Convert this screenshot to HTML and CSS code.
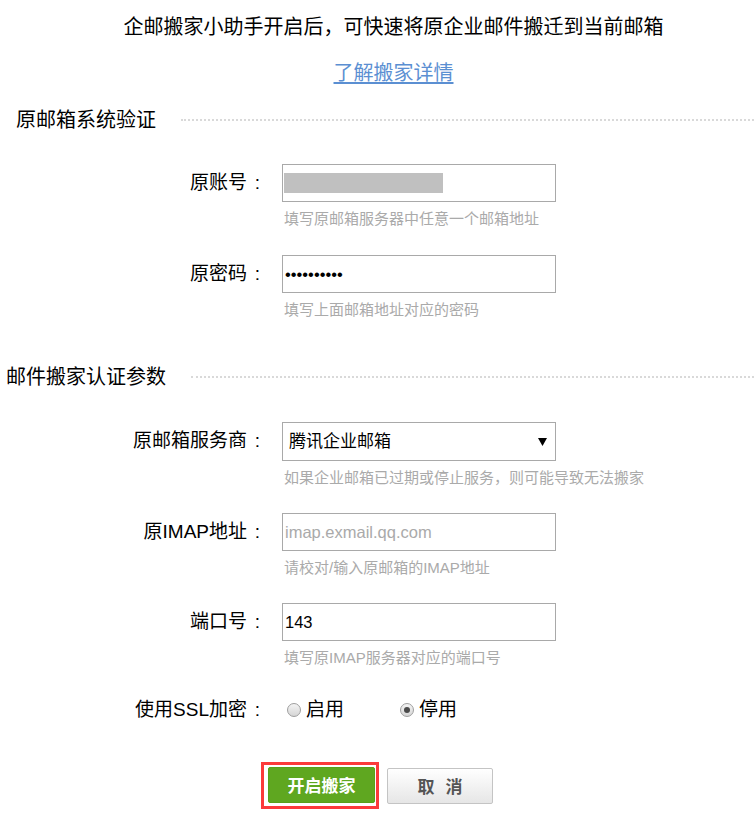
FILE: index.html
```html
<!DOCTYPE html>
<html lang="zh-CN">
<head>
<meta charset="utf-8">
<title>企邮搬家</title>
<link rel="stylesheet" href="styles.css">
</head>
<body>
<div class="page">
  <div class="intro">
    <p class="intro-text">企邮搬家小助手开启后，可快速将原企业邮件搬迁到当前邮箱</p>
    <a class="intro-link" href="#">了解搬家详情</a>
  </div>

  <div class="section-head section-head--first"><span class="section-title">原邮箱系统验证</span><i class="rule"></i></div>
  <div class="form form--first">
    <div class="row">
      <label class="label">原账号<span class="colon">:</span></label>
      <div class="field">
        <div class="input"><span class="redact"></span></div>
        <div class="hint">填写原邮箱服务器中任意一个邮箱地址</div>
      </div>
    </div>
    <div class="row">
      <label class="label">原密码<span class="colon">:</span></label>
      <div class="field">
        <input class="input" type="password" value="abcdefghij">
        <div class="hint">填写上面邮箱地址对应的密码</div>
      </div>
    </div>
  </div>

  <div class="section-head section-head--second"><span class="section-title">邮件搬家认证参数</span><i class="rule"></i></div>
  <div class="form form--second">
    <div class="row">
      <label class="label">原邮箱服务商<span class="colon">:</span></label>
      <div class="field">
        <div class="select">
          <span class="select-text">腾讯企业邮箱</span>
          <svg class="select-arrow" width="9" height="8" viewBox="0 0 9 8"><path d="M0 0H9L4.5 8Z" fill="#000"/></svg>
        </div>
        <div class="hint">如果企业邮箱已过期或停止服务，则可能导致无法搬家</div>
      </div>
    </div>
    <div class="row">
      <label class="label">原IMAP地址<span class="colon">:</span></label>
      <div class="field">
        <input class="input" type="text" placeholder="imap.exmail.qq.com">
        <div class="hint">请校对/输入原邮箱的IMAP地址</div>
      </div>
    </div>
    <div class="row">
      <label class="label">端口号<span class="colon">:</span></label>
      <div class="field">
        <input class="input" type="text" value="143">
        <div class="hint">填写原IMAP服务器对应的端口号</div>
      </div>
    </div>
    <div class="row row--ssl">
      <label class="label label--inline">使用SSL加密<span class="colon">:</span></label>
      <div class="radios">
        <span class="radio-opt"><span class="radio"></span><span class="radio-text">启用</span></span>
        <span class="radio-opt"><span class="radio radio--on"></span><span class="radio-text">停用</span></span>
      </div>
    </div>
  </div>

  <div class="actions">
    <span class="highlight"><button class="btn btn--primary" type="button">开启搬家</button></span>
    <button class="btn btn--cancel" type="button">取<span class="btn-space"></span>消</button>
  </div>
</div>
</body>
</html>
```

FILE: styles.css
```css
* { box-sizing: border-box; }

html, body {
  margin: 0;
  padding: 0;
  background: #fff;
}

body {
  font-family: "Liberation Sans", "Noto Sans CJK SC", sans-serif;
  color: #000;
  width: 754px;
  overflow: hidden;
}

.page {
  width: 754px;
}

.intro {
  padding: 13px 0 0 33px;
  text-align: center;
}

.intro-text {
  margin: 0;
  font-size: 20px;
  line-height: 28px;
}

.intro-link {
  display: inline-block;
  margin-top: 18px;
  font-size: 20px;
  line-height: 28px;
  color: #5b8fd2;
  text-decoration: underline;
  text-underline-offset: 2px;
}

.section-head {
  display: flex;
  align-items: center;
}

.section-head--first {
  margin-top: 19px;
  padding-left: 16px;
}

.section-head--second {
  margin-top: 43px;
  padding-left: 6px;
}

.section-title {
  font-size: 20px;
  line-height: 28px;
  white-space: nowrap;
}

.rule {
  flex: 1;
  margin-left: 25px;
  margin-top: -1px;
  height: 0;
  border-top: 2px dotted #d9d9d9;
}

.form {
  display: flex;
  flex-direction: column;
  gap: 26px;
}

.form--first { margin-top: 30px; }
.form--second { margin-top: 31px; gap: 25px; }

.row {
  display: grid;
  grid-template-columns: 266px 274px;
  column-gap: 16px;
}

.label {
  text-align: right;
  font-size: 19px;
  line-height: 38px;
  white-space: nowrap;
}

.colon {
  display: inline-block;
  width: 19px;
  padding-left: 2px;
  text-align: center;
  font-family: "Liberation Sans", sans-serif;
  font-size: 19px;
}

.field {
  display: flex;
  flex-direction: column;
}

.input {
  display: flex;
  align-items: center;
  width: 274px;
  height: 38px;
  margin: 0;
  padding: 0 2px;
  border: 1px solid #a9a9a9;
  background: #fff;
  font-family: "Liberation Sans", "Noto Sans CJK SC", sans-serif;
  font-size: 16.5px;
  color: #000;
  outline: none;
}

.input::placeholder {
  color: #aaa;
  opacity: 1;
}

.redact {
  display: block;
  margin-left: -1px;
  width: 159px;
  height: 20px;
  background: #c0c0c0;
}

.hint {
  margin-top: 7px;
  padding-left: 2px;
  font-size: 15px;
  line-height: 20px;
  color: #aaa;
  white-space: nowrap;
}

.select {
  display: flex;
  align-items: center;
  justify-content: space-between;
  width: 274px;
  height: 39px;
  padding: 0 8px 0 6px;
  border: 1px solid #a9a9a9;
  background: #fff;
}

.select-text {
  font-size: 17px;
  line-height: 24px;
}

.select-arrow {
  display: block;
}

.row--ssl {
  margin-top: 3px;
}

.label--inline {
  line-height: 28px;
}

.radios {
  display: flex;
  align-items: center;
  padding-left: 5px;
  gap: 56px;
}

.radio-opt {
  display: inline-flex;
  align-items: center;
  gap: 5px;
}

.radio {
  display: inline-block;
  width: 14px;
  height: 14px;
  border-radius: 50%;
  border: 1px solid #9e9e9e;
  background: linear-gradient(#f4f4f4, #d6d6d6);
  position: relative;
}

.radio--on::after {
  content: "";
  position: absolute;
  left: 3px;
  top: 3px;
  width: 6px;
  height: 6px;
  border-radius: 50%;
  background: #4a4a4a;
}

.radio-text {
  font-size: 19px;
  line-height: 28px;
}

.actions {
  display: flex;
  justify-content: center;
  align-items: center;
  gap: 8px;
  margin-top: 38px;
}

.highlight {
  display: inline-flex;
  border: 3px solid #fb3a3a;
  padding: 2px 1px 3px 4px;
}

.btn {
  height: 36px;
  margin: 0;
  padding: 0;
  font-family: "Noto Sans CJK SC", sans-serif;
  font-size: 17px;
  font-weight: bold;
  line-height: 34px;
  border-radius: 2px;
  cursor: pointer;
}

.btn--primary {
  width: 107px;
  color: #fff;
  background: #5fa720;
  border: 1px solid #58a01a;
}

.btn--cancel {
  width: 106px;
  color: #555;
  background: linear-gradient(#ffffff, #e6e6e6);
  border: 1px solid #c4c4c4;
}

.btn-space {
  display: inline-block;
  width: 11px;
}
```
